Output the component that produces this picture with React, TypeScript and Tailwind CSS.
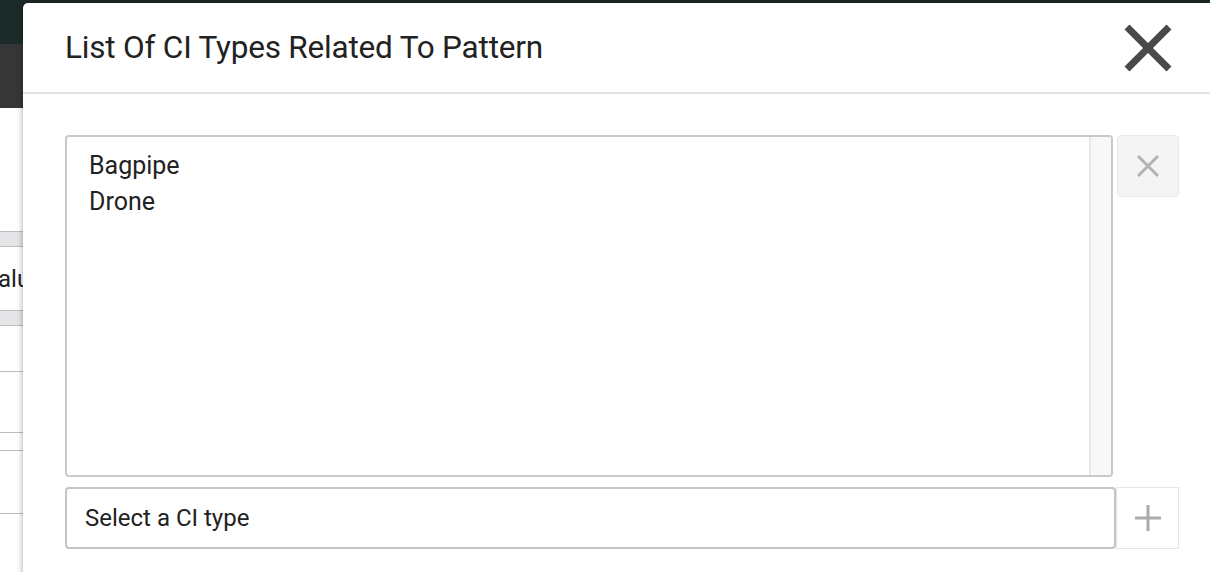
export default function App() {
  return (
    <div className="relative h-[572px] w-[1210px] overflow-hidden bg-[#f3f3f3] font-['Roboto',sans-serif]">
      {/* page behind the dialog */}
      <div className="h-[44px] bg-[#1c2a2a]" />
      <div className="h-[64px] bg-[#363636]" />
      <div className="h-[464px] bg-gradient-to-r from-white to-[#e4e4e4]">
        <div className="h-[123px]" />
        <div className="h-[16px] border-y border-[#bdbdbd] bg-[#e6e6e9]" />
        <div className="flex h-[63px] items-center text-[24px] text-[#222]">
          <span className="-ml-[2px]">alue</span>
        </div>
        <div className="h-[16px] border-y border-[#bdbdbd] bg-[#e6e6e9]" />
        <div className="h-[46px] border-b border-[#bdbdbd]" />
        <div className="h-[61px] border-b border-[#bdbdbd]" />
        <div className="h-[18px] border-b border-[#bdbdbd]" />
        <div className="h-[63px] border-b border-[#bdbdbd]" />
      </div>

      {/* dialog */}
      <div className="absolute left-[23px] top-[3px] h-[600px] w-[1220px] rounded-tl-[5px] bg-white shadow-[0_0_6px_rgba(0,0,0,0.35)]">
        <div className="flex h-[91px] items-center justify-between border-b-2 border-[#e2e2e2] pl-[42px] pr-[70px]">
          <h1 className="mt-[1px] text-[31.5px] tracking-[-0.2px] text-[#222]">List Of CI Types Related To Pattern</h1>
          <button className="flex h-[50px] w-[50px] items-center justify-center">
            <svg width="50" height="50" viewBox="0 0 50 50">
              <path d="M4 4 L46 46 M46 4 L4 46" stroke="#4a4a4a" strokeWidth="7" />
            </svg>
          </button>
        </div>

        <div className="pl-[42px] pt-[41px]">
          <div className="flex gap-[4px]">
            <div className="flex h-[342px] w-[1048px] overflow-hidden rounded-[4px] border-2 border-[#c9c9c9]">
              <div className="flex-1 pl-[22px] pt-[11px] text-[25px] leading-[36px] text-[#222]">
                <div>Bagpipe</div>
                <div>Drone</div>
              </div>
              <div className="w-[22px] border-l-2 border-[#e8e8e8] bg-[#f8f8f8]" />
            </div>
            <button className="flex h-[62px] w-[62px] items-center justify-center rounded-[4px] border border-[#e7e7e7] bg-[#f4f4f5]">
              <svg width="24" height="24" viewBox="0 0 24 24">
                <path d="M2 2 L22 22 M22 2 L2 22" stroke="#b3b3b3" strokeWidth="3" />
              </svg>
            </button>
          </div>

          <div className="mt-[10px] flex">
            <div className="flex h-[62px] w-[1051px] items-center rounded-[4px] border-2 border-[#c4c4c4] pl-[18px] text-[24px] text-[#222]">
              Select a CI type
            </div>
            <button className="flex h-[62px] w-[63px] items-center justify-center border border-[#e6e6e6]">
              <svg width="28" height="28" viewBox="0 0 28 28">
                <path d="M14 1 V27 M1 14 H27" stroke="#ababab" strokeWidth="3" />
              </svg>
            </button>
          </div>
        </div>
      </div>
    </div>
  );
}
